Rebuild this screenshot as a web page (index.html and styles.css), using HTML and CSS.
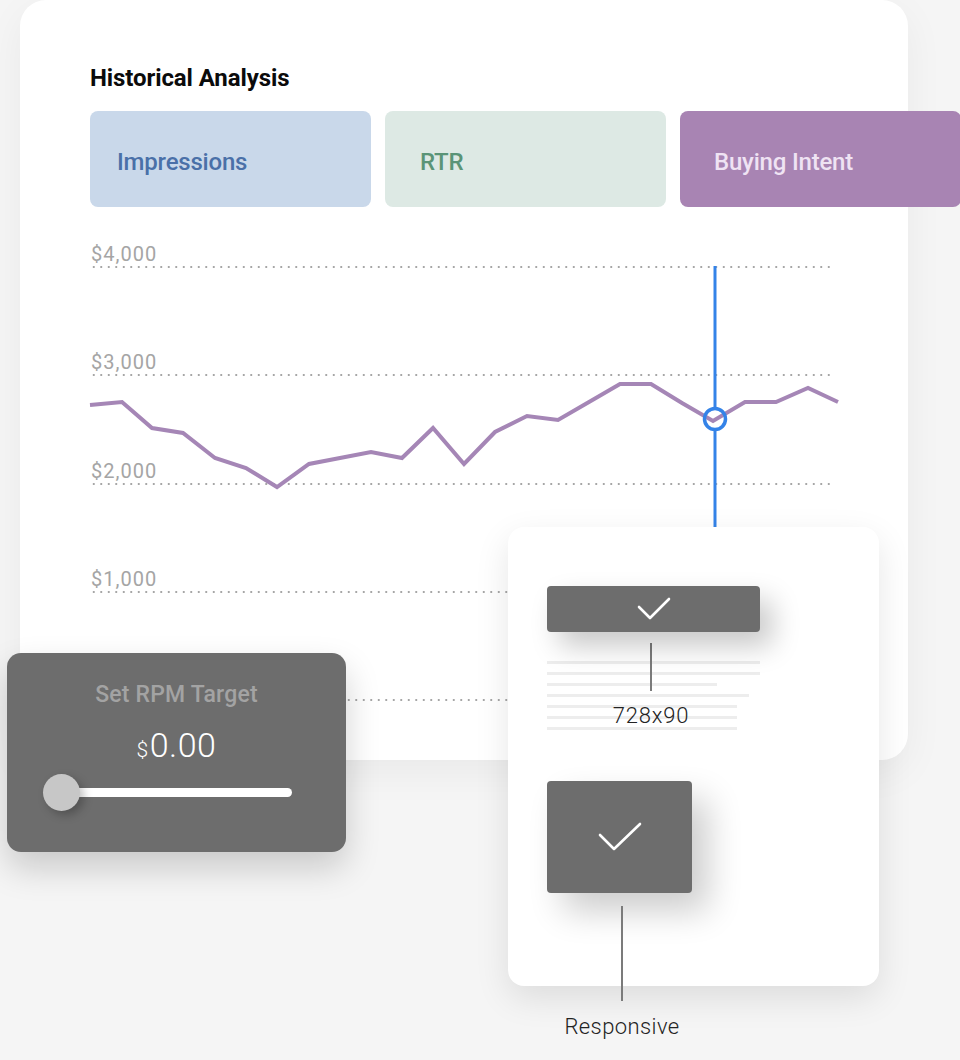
FILE: index.html
```html
<!DOCTYPE html>
<html>
<head>
<meta charset="utf-8">
<link rel="stylesheet" href="styles.css">
</head>
<body>
<div class="stage">
  <section class="panel">
    <h1 class="panel-title">Historical Analysis</h1>
    <div class="tabs">
      <div class="tab tab-impressions">Impressions</div>
      <div class="tab tab-rtr">RTR</div>
      <div class="tab tab-intent">Buying Intent</div>
    </div>
    <div class="chart">
      <div class="grid-row"><span class="axis-label">$4,000</span><span class="dots"></span></div>
      <div class="grid-row"><span class="axis-label">$3,000</span><span class="dots"></span></div>
      <div class="grid-row"><span class="axis-label">$2,000</span><span class="dots"></span></div>
      <div class="grid-row"><span class="axis-label">$1,000</span><span class="dots"></span></div>
      <div class="grid-row"><span class="axis-label"></span><span class="dots"></span></div>
      <svg class="chart-plot" width="780" height="320" viewBox="90 242 780 320">
        <polyline class="series" points="90,405 122,402 152,428 183,433 215,458 246,468 277,487 309,464 340,458 371,452 402,458 433,428 464,464 495,432 527,416 558,420 589,402 620,384 651,384 682,403 713,421 745,402 776,402 808,388 838,402"/>
        <line class="cursor" x1="715" y1="266" x2="715" y2="408"/>
        <line class="cursor" x1="715" y1="430" x2="715" y2="560"/>
        <circle class="cursor-dot" cx="715" cy="419" r="10.5"/>
      </svg>
    </div>
  </section>

  <div class="rpm-card">
    <div class="rpm-title">Set RPM Target</div>
    <div class="rpm-value"><span class="rpm-currency">$</span>0.00</div>
    <div class="slider">
      <span class="slider-knob"></span>
      <span class="slider-track"></span>
    </div>
  </div>

  <div class="size-card">
    <div class="banner-box">
      <svg class="check" width="34" height="24" viewBox="0 0 34 24"><polyline points="2,10 13,21 32,2"/></svg>
    </div>
    <div class="text-lines">
      <span class="text-line"></span>
      <span class="text-line"></span>
      <span class="text-line w170"></span>
      <span class="text-line w202"></span>
      <span class="text-line w190"></span>
      <span class="text-line w190"></span>
      <span class="text-line w190"></span>
      <div class="lines-callout">
        <span class="connector short"></span>
        <span class="callout-label">728x90</span>
      </div>
    </div>
    <div class="responsive">
      <div class="square-box">
        <svg class="check" width="44" height="30" viewBox="0 0 44 30"><polyline points="2,13 16,27 42,2"/></svg>
      </div>
      <span class="connector long"></span>
      <span class="callout-label">Responsive</span>
    </div>
  </div>
</div>
</body>
</html>
```

FILE: styles.css
```css
* { box-sizing: border-box; }

html, body {
  margin: 0;
  padding: 0;
}

body {
  background: #f5f5f5;
  font-family: Roboto, "Liberation Sans", sans-serif;
  width: 960px;
  height: 1060px;
  overflow: hidden;
}

.stage {
  position: relative;
  width: 960px;
  height: 1060px;
}

/* main panel */
.panel {
  margin-left: 20px;
  width: 888px;
  height: 760px;
  background: #ffffff;
  border-radius: 26px;
  box-shadow: 0 12px 40px rgba(0, 0, 0, 0.05);
  padding: 63px 0 0 70px;
}

.panel-title {
  margin: 0;
  font-size: 24px;
  line-height: 30px;
  font-weight: 700;
  color: #0b0b0b;
  letter-spacing: -0.1px;
}

.tabs {
  margin-top: 18px;
  display: grid;
  grid-template-columns: repeat(3, 281px);
  column-gap: 14px;
  width: 871px;
}

.tab {
  height: 96px;
  border-radius: 8px;
  display: flex;
  align-items: center;
  padding-top: 5px;
  font-size: 24px;
  font-weight: 500;
  letter-spacing: -0.2px;
}

.tab-impressions {
  background: #c9d8ea;
  color: #4a70a8;
  padding-left: 27px;
}

.tab-rtr {
  background: #dde9e4;
  color: #5a9477;
  padding-left: 35px;
}

.tab-intent {
  background: #a884b3;
  color: #efe3f3;
  padding-left: 34px;
}

/* chart */
.chart {
  position: relative;
  margin-top: 35px;
  width: 743px;
  display: flex;
  flex-direction: column;
  row-gap: 82.25px;
}

.grid-row {
  display: flex;
  flex-direction: column;
  height: 26px;
}

.axis-label {
  display: block;
  height: 24px;
  font-size: 20px;
  line-height: 24px;
  color: #a5a5a5;
  letter-spacing: 1px;
  padding-left: 1px;
}

.dots {
  display: block;
  height: 2px;
  background-image: radial-gradient(circle, #a6a6a6 0.9px, transparent 1.1px);
  background-size: 7.5px 2px;
  background-repeat: repeat-x;
}

.chart-plot {
  position: absolute;
  left: 0;
  top: 0;
  overflow: visible;
}

.series {
  fill: none;
  stroke: #a586b6;
  stroke-width: 4;
  stroke-linejoin: miter;
  stroke-linecap: butt;
}

.cursor {
  stroke: #3483e8;
  stroke-width: 3;
}

.cursor-dot {
  fill: none;
  stroke: #3483e8;
  stroke-width: 3.5;
}

/* RPM card */
.rpm-card {
  position: absolute;
  left: 7px;
  top: 653px;
  width: 339px;
  height: 199px;
  background: #6d6d6d;
  border-radius: 14px;
  box-shadow: 0 16px 34px rgba(0, 0, 0, 0.18);
  padding: 29px 0 0 36px;
  display: flex;
  flex-direction: column;
}

.rpm-title {
  width: 267px;
  text-align: center;
  font-size: 23px;
  line-height: 26px;
  font-weight: 500;
  letter-spacing: 0.2px;
  color: #a3a3a3;
}

.rpm-value {
  width: 267px;
  margin-top: 17px;
  text-align: center;
  font-size: 34px;
  line-height: 40px;
  font-weight: 300;
  color: #ffffff;
  letter-spacing: 0.5px;
}

.rpm-currency {
  font-size: 21px;
  margin-right: 1px;
}

.slider {
  margin-top: 3px;
  width: 249px;
  height: 38px;
  display: flex;
  align-items: center;
}

.slider-knob {
  position: relative;
  z-index: 1;
  width: 37px;
  height: 37px;
  border-radius: 50%;
  background: #c7c7c7;
  box-shadow: 4px 4px 10px rgba(0, 0, 0, 0.25);
  flex: none;
  margin-right: -18px;
}

.slider-track {
  flex: 1;
  height: 9px;
  border-radius: 5px;
  background: #ffffff;
}

/* size card */
.size-card {
  position: absolute;
  left: 508px;
  top: 527px;
  width: 371px;
  height: 459px;
  background: #ffffff;
  border-radius: 16px;
  box-shadow: 0 12px 34px rgba(0, 0, 0, 0.1);
  padding: 59px 0 0 39px;
  display: flex;
  flex-direction: column;
  align-items: flex-start;
}

.size-card > * {
  flex: none;
}

.banner-box {
  position: relative;
  z-index: 1;
  width: 213px;
  height: 46px;
  border-radius: 4px;
  background: #6d6d6d;
  box-shadow: 12px 14px 28px rgba(0, 0, 0, 0.22);
  display: flex;
  align-items: center;
  justify-content: center;
}

.check {
  display: block;
  overflow: visible;
}

.check polyline {
  fill: none;
  stroke: #ffffff;
  stroke-width: 2.6;
  stroke-linecap: round;
  stroke-linejoin: round;
}

.text-lines {
  position: relative;
  margin-top: 29px;
  width: 213px;
  display: flex;
  flex-direction: column;
  row-gap: 8px;
}

.text-line {
  display: block;
  flex: none;
  width: 213px;
  height: 3px;
  background: #ededed;
}

.text-line.w170 { width: 170px; }
.text-line.w202 { width: 202px; }
.text-line.w190 { width: 190px; }

.lines-callout {
  position: absolute;
  left: 0;
  top: -18px;
  width: 208px;
  display: flex;
  flex-direction: column;
  align-items: center;
}

.connector {
  display: block;
  flex: none;
  width: 1.5px;
  background: #7b7b7b;
}

.connector.short { height: 48px; }
.connector.long { height: 95px; margin-top: 13px; }

.callout-label {
  font-size: 22px;
  line-height: 26px;
  font-weight: 300;
  color: #232323;
  letter-spacing: 0.8px;
}

.lines-callout .callout-label {
  margin-top: 12px;
}

.responsive {
  margin-top: 51px;
  width: 150px;
  display: flex;
  flex-direction: column;
  align-items: center;
}

.square-box {
  align-self: flex-start;
  flex: none;
  width: 145px;
  height: 112px;
  border-radius: 4px;
  background: #6d6d6d;
  box-shadow: 16px 18px 34px rgba(0, 0, 0, 0.2);
  display: flex;
  align-items: center;
  justify-content: center;
}

.responsive .callout-label {
  margin-top: 13px;
  letter-spacing: 0.4px;
}
```
